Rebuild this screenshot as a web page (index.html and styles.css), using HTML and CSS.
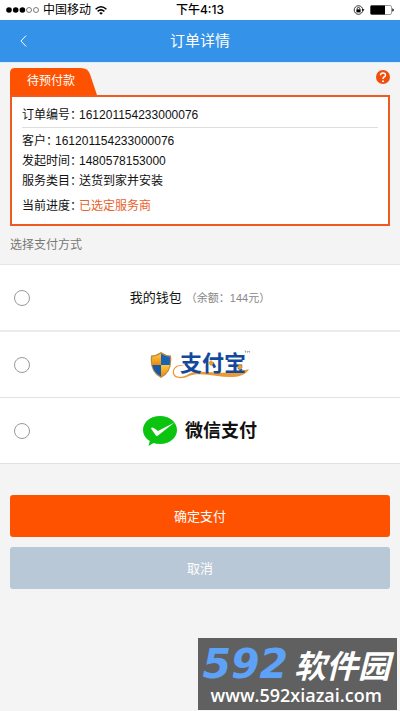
FILE: index.html
```html
<!DOCTYPE html>
<html lang="zh-CN">
<head>
<meta charset="utf-8">
<meta name="viewport" content="width=device-width, initial-scale=1">
<title>订单详情</title>
<link rel="stylesheet" href="styles.css">
</head>
<body>
<div class="status">
  <div class="status-left">
    <svg class="signal" viewBox="0 0 33 6" width="33" height="6" aria-hidden="true">
      <circle cx="3" cy="3" r="2.8"/><circle cx="9.7" cy="3" r="2.8"/><circle cx="16.4" cy="3" r="2.8"/>
      <g fill="none" stroke="#444" stroke-width=".7"><circle cx="23" cy="3" r="2.5"/><circle cx="30" cy="3" r="2.5"/></g>
    </svg>
    <span>中国移动</span>
    <svg class="wifi" viewBox="0 0 12 9" width="12" height="9" aria-hidden="true">
      <g fill="none" stroke="#000" stroke-width="1.5"><path d="M.6 3.2Q6-1.6 11.4 3.2"/><path d="M2.6 5.4Q6 2.4 9.4 5.4"/></g>
      <path d="M4.2 6.9Q6 5.5 7.8 6.9L6 8.8z"/>
    </svg>
  </div>
  <time class="clock">下午4:13</time>
  <div class="status-right">
    <svg viewBox="0 0 12 10" width="12" height="10" aria-hidden="true">
      <circle cx="5.5" cy="5" r="4.3" fill="none" stroke="#222" stroke-width=".9"/>
      <path d="M8.5 4.2h3L10 6.2z"/>
      <rect x="3.4" y="4.4" width="4.2" height="3"/>
      <path d="M4.2 4.6V3.7a1.3 1.3 0 0 1 2.6 0v.9" fill="none" stroke="#000" stroke-width=".8"/>
    </svg>
    <svg viewBox="0 0 24 10" width="24" height="10" aria-hidden="true">
      <rect x=".5" y=".5" width="21" height="9" rx="1.5" fill="#fff" stroke="#777" stroke-width=".7"/>
      <path d="M1.5.6H15v8.8H1.5a1 1 0 0 1-1-1V1.6a1 1 0 0 1 1-1z"/>
      <path d="M22.3 3.3q1.5.5 1.5 1.7t-1.5 1.7z"/>
    </svg>
  </div>
</div>

<header class="bar">
  <a class="back" href="#" aria-label="返回">
    <svg viewBox="0 0 7 12" width="7" height="12" aria-hidden="true"><path d="M6.2.5L.9 6l5.3 5.5" fill="none" stroke="#fff" stroke-width="1"/></svg>
  </a>
  <h1>订单详情</h1>
</header>

<main>
  <section class="order">
    <div class="order-top">
      <div class="tab">
        <svg class="tab-shape" viewBox="0 0 86 27" preserveAspectRatio="none" aria-hidden="true"><path d="M0 27V5Q0 0 5 0H70Q77 0 79 6L86 27z" fill="#ff5200"/></svg>
        <span>待预付款</span>
      </div>
      <a class="help" href="#" aria-label="帮助">
        <svg viewBox="0 0 14 14" width="14" height="14" aria-hidden="true">
          <circle cx="7" cy="7" r="7" fill="#ee4f0c"/>
          <path d="M4.5 5.2Q4.6 3 7 3t2.5 2Q9.5 6.200 8.100 7 7 7.600 7 9" fill="none" stroke="#fff" stroke-width="1.500"/>
          <circle cx="7" cy="11.200" r=".95" fill="#fff"/>
        </svg>
      </a>
    </div>
    <dl class="card">
      <div class="line first"><dt>订单编号：</dt><dd>161201154233000076</dd></div>
      <div class="line"><dt>客户：</dt><dd>161201154233000076</dd></div>
      <div class="line"><dt>发起时间：</dt><dd>1480578153000</dd></div>
      <div class="line"><dt>服务类目：</dt><dd>送货到家并安装</dd></div>
      <div class="line progress"><dt>当前进度：</dt><dd>已选定服务商</dd></div>
    </dl>
  </section>

  <form>
    <h2>选择支付方式</h2>
    <div class="methods">
      <label class="method">
        <input type="radio" name="pay" value="wallet">
        <span class="method-name">我的钱包<small>（余额：144元）</small></span>
      </label>
      <label class="method">
        <input type="radio" name="pay" value="alipay" aria-label="支付宝">
        <svg class="method-name" viewBox="0 -7 100 42" width="100" height="42" aria-hidden="true">
          <defs><linearGradient id="gold" x2="0" y2="1"><stop offset="0" stop-color="#ffc83c"/><stop offset="1" stop-color="#e98b10"/></linearGradient></defs>
          <path d="M11 1Q16 4.500 21 4.500Q23 21 11 27Q-1 21 1 4.500Q6 4.500 11 1z" fill="#b98a45"/>
          <path d="M11 2.800V14H2.200Q1.600 9 2.300 5.800Q7 5.500 11 2.800z" fill="url(#gold)"/>
          <path d="M11 2.800Q15 5.500 19.700 5.800Q20.400 9 19.800 14H11z" fill="#1c62b4"/>
          <path d="M2.200 14H11V25.500Q4 22 2.200 14z" fill="#1758a8"/>
          <path d="M19.800 14H11V25.500Q18 22 19.800 14z" fill="url(#gold)"/>
          <path d="M35 15C28 13.500 24 17 24 21C24 26.500 32 27 37 24C41 21.500 44 20.500 50 20.800C64 21.500 84 23.500 99 18C95 27 80 27 67 25C55 23.200 45 22 39 25C31 29 22.500 27.500 22.800 21C23 15.500 29 12.500 35 15z" fill="#e99a35"/>
          <text class="alipay-word" x="30" y="20">支付宝</text>
          <path d="M61 9l3 3-3 3-3-3zM90 13l3 3-3 3-3-3z" fill="#ef9a2c"/>
          <path d="M94.500 0h2M95.500 0v2M97.500 2V0l1 1 1-1v2" fill="none" stroke="#555" stroke-width=".4"/>
        </svg>
      </label>
      <label class="method">
        <input type="radio" name="pay" value="wechat">
        <span class="method-name wechat">
          <svg viewBox="0 0 34 32" width="34" height="32" aria-hidden="true">
            <path d="M17 1C26.400 1 34 7 34 15S26.400 29 17 29q-3.500 0-6.500-1L5.500 31l1.300-5Q0 22 0 15C0 7 7.600 1 17 1z" fill="#0bc40f"/>
            <path d="M8 13.500q.8-1.800 2.800-.5l4.200 3L31.500 7.500L15 20.500q-1.600 1.200-2.500-.5z" fill="#fff"/>
          </svg>
          <span>微信支付</span>
        </span>
      </label>
    </div>
    <div class="actions">
      <button class="btn confirm" type="submit">确定支付</button>
      <button class="btn cancel" type="button">取消</button>
    </div>
  </form>
</main>

<aside class="watermark">
  <div class="brand"><span class="brand-num">592</span><span class="brand-name">软件园</span></div>
  <div class="site">www.592xiazai.com</div>
</aside>
</body>
</html>
```
FILE: styles.css
```css
* { box-sizing: border-box; }
body {
  margin: 0;
  min-height: 100vh;
  background: #f4f4f4;
  color: #111;
  font: 12px/20px "Liberation Sans", "Noto Sans CJK SC", sans-serif;
}
h1, h2, dl, dd { margin: 0; font-weight: normal; }
svg { display: block; flex: none; }

.status {
  display: grid;
  grid-template-columns: 1fr auto 1fr;
  align-items: center;
  padding: 0 6px;
  background: #fff;
  color: #000;
}
.status-left, .status-right { display: flex; align-items: center; gap: 4px; }
.status-right { justify-content: flex-end; gap: 5px; }
.clock { font-family: Inter, "Noto Sans CJK SC", sans-serif; font-weight: 500; }

.bar {
  display: grid;
  grid-template-columns: 1fr auto 1fr;
  align-items: center;
  height: 43px;
  padding: 0 10px;
  background: #3492e9;
  border-bottom: 1px solid #d4effc;
  color: #fff;
}
.back { padding: 10px; justify-self: start; }
.bar h1 { font-size: 15px; }

.order { padding: 5px 10px 0; }
.order-top { display: flex; justify-content: space-between; align-items: flex-start; }
.tab {
  position: relative;
  padding: 3px 22px 4px 17px;
  color: #fff;
}
.tab-shape { position: absolute; inset: 0; width: 100%; height: 100%; }
.tab span { position: relative; }
.help { padding-top: 2px; }
.card {
  padding: 8px 10px;
  background: #fff;
  border: 2px solid #ee5a22;
}
.line { display: flex; }
.line dd { margin-left: -3px; }
.first {
  padding-bottom: 2px;
  margin-bottom: 3px;
  border-bottom: 1px solid #dedede;
}
.progress { margin-top: 5px; }
.progress dd { color: #e8622c; }

h2 {
  padding: 9px 10px;
  font-size: 12px;
  color: #777;
}
.methods { background: #fff; border-top: 1px solid #e6e6e6; }
.method {
  display: grid;
  grid-template-columns: 16px 1fr 16px;
  align-items: center;
  min-height: 66px;
  padding: 0 14px;
  border-bottom: 1px solid #e2e2e2;
}
.method:first-child { min-height: 67px; border-bottom: 2px solid #ebebeb; }
.method input {
  appearance: none;
  width: 16px;
  height: 16px;
  margin: 0;
  border: 1px solid #999;
  border-radius: 50%;
  background: #fff;
}
.method input:checked { border: 5px solid #ff5200; }
.method-name { justify-self: center; font-size: 13px; }
.method-name small { margin-left: 4px; font-size: 11px; color: #888; }
.alipay-word {
  font: bold 22px "Noto Sans CJK SC", sans-serif;
  fill: #12499a;
}
.wechat {
  display: flex;
  align-items: center;
  gap: 8px;
  font-size: 18px;
  font-weight: bold;
}

.actions { display: grid; gap: 10px; padding: 31px 10px; }
.btn {
  height: 42px;
  padding: 0 0 2px;
  border: 0;
  border-radius: 3px;
  color: #fff;
  font: 13px "Liberation Sans", "Noto Sans CJK SC", sans-serif;
}
.confirm { background: #ff5200; }
.cancel { background: #b9c8d7; }

.watermark {
  position: fixed;
  right: 3px;
  bottom: 1px;
  padding: 9px 7px 1px 4px;
  background: #606060;
  color: #fff;
  text-align: center;
}
.brand {
  display: flex;
  align-items: center;
  gap: 6px;
  line-height: 34px;
  font-style: italic;
  font-weight: bold;
}
.brand-num { font-family: "DejaVu Sans", sans-serif; font-size: 41px; color: #5ea2f8; }
.brand-name { font-family: "Noto Sans CJK SC", sans-serif; font-size: 32px; }
.site { font: 600 18px/28px "Open Sans", sans-serif; }
```
